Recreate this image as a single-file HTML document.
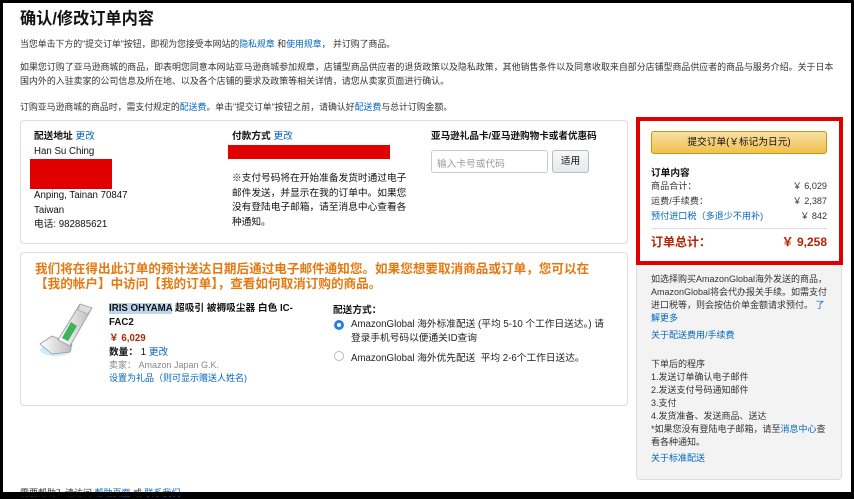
<!DOCTYPE html>
<html><head><meta charset="utf-8"><style>
*{margin:0;padding:0;box-sizing:border-box}
body{width:854px;height:496px;background:#000;position:relative;overflow:hidden;font-family:"Liberation Sans","Noto Sans CJK SC",sans-serif;color:#111;font-size:11px}
.pg{position:absolute;left:3px;top:3px;width:848px;height:489px;background:#fff}
.a{position:absolute;white-space:nowrap}
a,.l{color:#0066c0;text-decoration:none}
.box{position:absolute;border:1px solid #ddd;border-radius:4px;background:#fff}
.b{font-weight:bold}
.red{position:absolute;background:#e00000}
.row{position:absolute;left:651px;width:176px;display:flex;justify-content:space-between;font-size:9.1px;color:#333;line-height:13px}
</style></head><body>
<div class="pg"></div>
<div class="a" style="left:20px;top:8px;font-size:16.2px;line-height:22px;font-weight:bold;color:#111">确认/修改订单内容</div>
<div class="a" style="left:20px;top:37px;font-size:8.9px;color:#333">当您单击下方的"提交订单"按钮，即视为您接受本网站的<span class="l">隐私规章</span> 和<span class="l">使用规章</span>， 并订购了商品。</div>
<div class="a" style="left:20px;top:61px;font-size:8.95px;color:#333;line-height:13.5px">如果您订购了亚马逊商城的商品，即表明您同意本网站亚马逊商城参加规章，店铺型商品供应者的退货政策以及隐私政策，其他销售条件以及同意收取来自部分店铺型商品供应者的商品与服务介绍。关于日本<br>国内外的入驻卖家的公司信息及所在地、以及各个店铺的要求及政策等相关详情，请您从卖家页面进行确认。</div>
<div class="a" style="left:20px;top:100px;font-size:8.9px;color:#333">订购亚马逊商城的商品时，需支付规定的<span class="l">配送费</span>。单击"提交订单"按钮之前，请确认好<span class="l">配送费</span>与总计订购金额。</div>

<div class="box" style="left:20px;top:120px;width:608px;height:124px"></div>
<div class="a b" style="left:34px;top:130px;font-size:9.7px;line-height:14px">配送地址 <span class="l" style="font-weight:normal">更改</span></div>
<div class="a" style="left:34px;top:145px;font-size:9.7px;line-height:14px">Han Su Ching</div>
<div class="red" style="left:30px;top:159px;width:82px;height:30px"></div>
<div class="a" style="left:34px;top:189px;font-size:9.7px;line-height:14.5px">Anping, Tainan 70847<br>Taiwan<br>电话: 982885621</div>
<div class="a b" style="left:232px;top:130px;font-size:9.7px;line-height:14px">付款方式 <span class="l" style="font-weight:normal">更改</span></div>
<div class="red" style="left:228px;top:145px;width:162px;height:14px"></div>
<div class="a" style="left:232px;top:172px;font-size:9.7px;line-height:14.5px">※支付号码将在开始准备发货时通过电子<br>邮件发送，并显示在我的订单中。如果您<br>没有登陆电子邮箱，请至消息中心查看各<br>种通知。</div>
<div class="a b" style="left:431px;top:130px;font-size:9.6px;line-height:14px">亚马逊礼品卡/亚马逊购物卡或者优惠码</div>
<div style="position:absolute;left:431px;top:150px;width:117px;height:23px;border:1px solid #ccc;border-radius:3px;color:#999;font-size:9.7px;padding:5px 5px">输入卡号或代码</div>
<div style="position:absolute;left:552px;top:150px;width:37px;height:23px;border:1px solid #bbb;border-radius:3px;background:linear-gradient(#f7f8fa,#e7e9ec);font-size:9.7px;text-align:center;line-height:21px">适用</div>

<div class="box" style="left:20px;top:252px;width:608px;height:154px"></div>
<div class="a b" style="left:35px;top:262px;font-size:12.6px;line-height:15px;color:#e47911">我们将在得出此订单的预计送达日期后通过电子邮件通知您。如果您想要取消商品或订单，您可以在<br>【我的帐户】中访问【我的订单】，查看如何取消订购的商品。</div>
<svg style="position:absolute;left:36px;top:300px" width="64" height="60" viewBox="0 0 64 60">
<defs><linearGradient id="g" x1="0" x2="1"><stop offset="0" stop-color="#fff"/><stop offset="1" stop-color="#bbb"/></linearGradient></defs>
<ellipse cx="20" cy="50" rx="16" ry="6" fill="#bfe6ff" opacity=".8"/>
<path d="M4 44 L16 36 L36 44 L34 52 L16 54 Z" fill="url(#g)" stroke="#999" stroke-width=".8"/>
<path d="M22 40 L44 4 L56 8 L34 46 Z" fill="url(#g)" stroke="#999" stroke-width=".8"/>
<path d="M26 38 L35 22 L41 26 L32 41 Z" fill="#3db35a"/>
<path d="M44 4 L56 8 L52 14 L42 10 Z" fill="#ddd" stroke="#999" stroke-width=".6"/>
</svg>
<div class="a b" style="left:109px;top:302px;font-size:9.7px;line-height:14px"><span style="background:#bcd6f0">IRIS OHYAMA</span> 超吸引 被褥吸尘器 白色 IC-<br>FAC2</div>
<div class="a b" style="left:109px;top:330px;font-size:9.7px;color:#b12704">￥ 6,029</div>
<div class="a" style="left:109px;top:344px;font-size:9.7px"><b>数量：</b> 1 <span class="l">更改</span></div>
<div class="a" style="left:109px;top:358px;font-size:9px;color:#888">卖家： Amazon Japan G.K.</div>
<div class="a l" style="left:109px;top:371px;font-size:9px">设置为礼品（则可显示赠送人姓名)</div>
<div class="a b" style="left:333px;top:302px;font-size:9.7px">配送方式：</div>
<div style="position:absolute;left:334px;top:320px;width:10px;height:10px;border-radius:50%;background:#2a80d8;border:3px solid #2a80d8"><div style="width:4px;height:4px;background:#fff;border-radius:50%"></div></div>
<div class="a" style="left:351px;top:318px;font-size:9.7px;line-height:14px;color:#222">AmazonGlobal 海外标准配送 (平均 5-10 个工作日送达。) 请<br>登录手机号码以便通关ID查询</div>
<div style="position:absolute;left:334px;top:351px;width:10px;height:10px;border-radius:50%;border:1px solid #bbb"></div>
<div class="a" style="left:351px;top:350px;font-size:9.7px;color:#222">AmazonGlobal 海外优先配送&nbsp; 平均 2-6个工作日送达。</div>

<div style="position:absolute;left:636px;top:118px;width:206px;height:362px;background:#f3f3f3;border:1px solid #ddd;border-radius:4px"></div>
<div style="position:absolute;left:636px;top:117px;width:207px;height:148px;border:4px solid #e00000;background:#fff"></div>
<div style="position:absolute;left:651px;top:131px;width:176px;height:23px;border:1px solid #c89411;border-radius:3px;background:linear-gradient(#f7dfa5,#f0c14b);text-align:center;line-height:21px;font-size:9.7px">提交订单(￥标记为日元)</div>
<div class="a b" style="left:651px;top:165px;font-size:9.7px">订单内容</div>
<div class="row" style="top:180px"><span>商品合计：</span><span>￥ 6,029</span></div>
<div class="row" style="top:195px"><span>运费/手续费：</span><span>￥ 2,387</span></div>
<div class="row" style="top:210px"><span class="l">预付进口税（多退少不用补)</span><span>￥ 842</span></div>
<div style="position:absolute;left:651px;top:228px;width:176px;height:1px;background:#ddd"></div>
<div class="row b" style="top:234px;font-size:12px;line-height:16px;color:#b12704"><span>订单总计：</span><span>￥ 9,258</span></div>
<div class="a" style="left:651px;top:273px;font-size:9px;line-height:13px;color:#333">如选择购买AmazonGlobal海外发送的商品，<br>AmazonGlobal将会代办报关手续。如需支付<br>进口税等，则会按估价单金额请求预付。 <span class="l">了</span><br><span class="l">解更多</span></div>
<div class="a l" style="left:651px;top:328px;font-size:9px">关于配送费用/手续费</div>
<div class="a" style="left:651px;top:358px;font-size:9px;line-height:13px;color:#333">下单后的程序<br>1.发送订单确认电子邮件<br>2.发送支付号码通知邮件<br>3.支付<br>4.发货准备、发送商品、送达<br>*如果您没有登陆电子邮箱，请至<span class="l">消息中心</span>查<br>看各种通知。</div>
<div class="a l" style="left:651px;top:451px;font-size:9px">关于标准配送</div>
<div class="a" style="left:20px;top:486px;font-size:9px;color:#333">需要帮助？请访问 <span class="l">帮助页面</span> 或 <span class="l">联系我们</span></div>
<div style="position:absolute;left:0;top:492px;width:854px;height:4px;background:#000"></div>
</body></html>
